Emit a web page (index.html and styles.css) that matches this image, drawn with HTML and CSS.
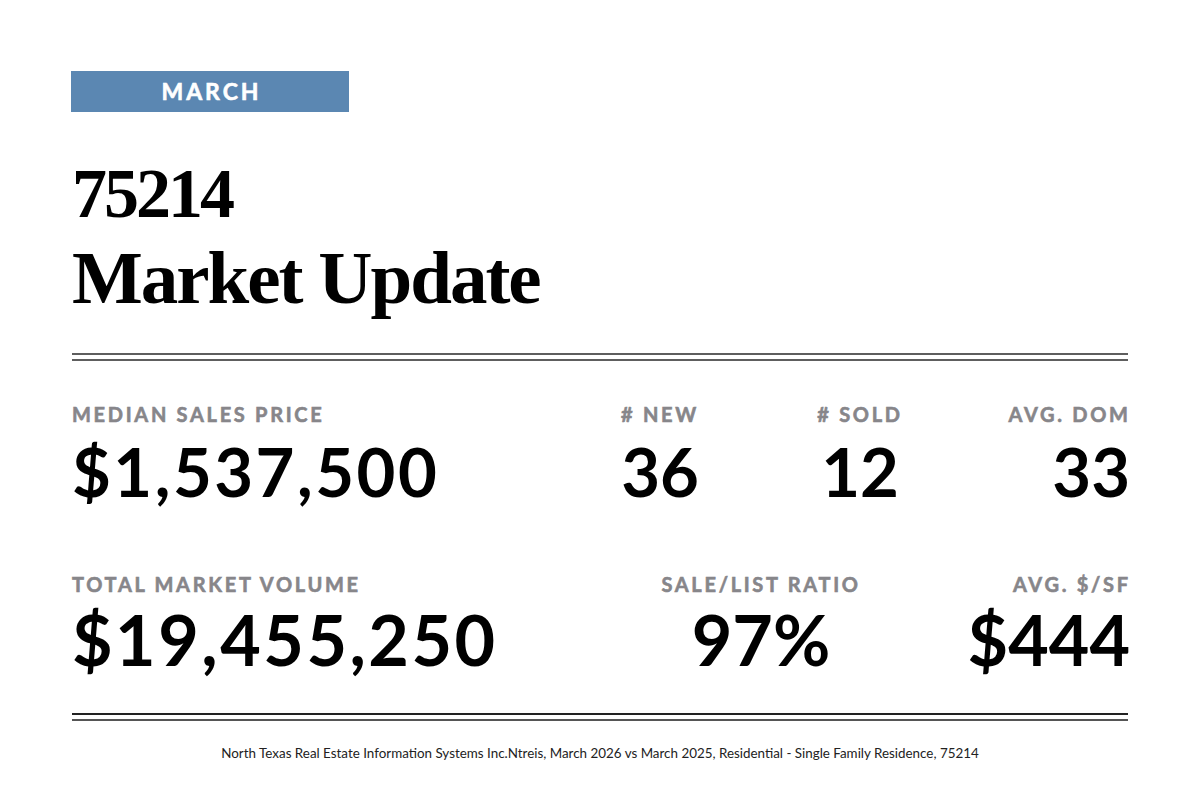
FILE: index.html
```html
<!DOCTYPE html>
<html lang="en">
<head>
<meta charset="utf-8">
<title>75214 Market Update</title>
<link rel="stylesheet" href="styles.css">
</head>
<body>
<main class="page">
  <div class="badge">MARCH</div>
  <h1 class="title">
    <span class="zip">75214</span>
    <span class="headline">Market Update</span>
  </h1>
  <div class="rule"></div>
  <section class="stats stats-top">
    <div class="stat stat-left">
      <div class="label">MEDIAN SALES PRICE</div>
      <div class="value">$1,537,500</div>
    </div>
    <div class="stat stat-center">
      <div class="label"># NEW</div>
      <div class="value value-small">36</div>
    </div>
    <div class="stat stat-center">
      <div class="label"># SOLD</div>
      <div class="value value-small">12</div>
    </div>
    <div class="stat stat-right">
      <div class="label">AVG. DOM</div>
      <div class="value value-small">33</div>
    </div>
  </section>
  <section class="stats stats-bottom">
    <div class="stat stat-left">
      <div class="label">TOTAL MARKET VOLUME</div>
      <div class="value value-big">$19,455,250</div>
    </div>
    <div class="stat stat-center">
      <div class="label">SALE/LIST RATIO</div>
      <div class="value value-big value-small">97%</div>
    </div>
    <div class="stat stat-right">
      <div class="label">AVG. $/SF</div>
      <div class="value value-big value-small">$444</div>
    </div>
  </section>
  <div class="rule rule-dark"></div>
  <p class="source">North Texas Real Estate Information Systems Inc.Ntreis, March 2026 vs March 2025, Residential - Single Family Residence, 75214</p>
</main>
</body>
</html>
```

FILE: styles.css
```css
html, body {
  margin: 0;
  padding: 0;
  background: #ffffff;
}

body {
  font-family: "Lato", "Liberation Sans", sans-serif;
  color: #000;
}

.page {
  width: 1056px;
  margin: 0 auto;
  padding-top: 71px;
}

.badge {
  width: 278px;
  height: 41px;
  margin-left: -1px;
  background: #5b87b2;
  color: #fff;
  font-weight: 700;
  font-size: 23px;
  letter-spacing: 3px;
  line-height: 41px;
  text-align: center;
  text-indent: 3px;
  -webkit-text-stroke: 0.6px #fff;
}

.title {
  margin: 41px 0 0 0;
  font-family: "Liberation Serif", "Times New Roman", serif;
  font-weight: 700;
  color: #000;
}

.zip {
  display: block;
  font-size: 70px;
  line-height: 82px;
  letter-spacing: -3px;
}

.headline {
  display: block;
  font-size: 75px;
  line-height: 86px;
  letter-spacing: -2px;
}

.rule {
  height: 4px;
  border-top: 2px solid #5e5e5e;
  border-bottom: 2px solid #5e5e5e;
  margin-top: 32px;
}

.rule-dark {
  border-top-color: #222;
  border-bottom-color: #555;
  margin-top: 38px;
}

.stats {
  display: grid;
}

.stats-top {
  grid-template-columns: 1fr 200px 200px 168px;
  margin-top: 41px;
}

.stats-bottom {
  grid-template-columns: 1fr 398px 168px;
  margin-top: 66px;
}

.stat-left { text-align: left; }
.stat-center { text-align: center; }
.stat-right { text-align: right; }

.label {
  font-size: 20px;
  line-height: 24px;
  font-weight: 700;
  letter-spacing: 2.7px;
  color: #87868a;
  -webkit-text-stroke: 0.6px #87868a;
  white-space: nowrap;
}

.stat-right .label {
  margin-right: -2.7px;
}

.value {
  font-size: 67px;
  line-height: 70px;
  font-weight: 700;
  letter-spacing: 2.5px;
  margin-top: 10px;
  white-space: nowrap;
}

.value-small {
  letter-spacing: 0;
}

.value-big {
  font-size: 70px;
  line-height: 72px;
  margin-top: 7px;
}

.stat-right .value {
  margin-right: -2px;
}

.source {
  margin: 24px 0 0 0;
  font-size: 13.4px;
  line-height: 16px;
  text-align: center;
  color: #222;
}
```
